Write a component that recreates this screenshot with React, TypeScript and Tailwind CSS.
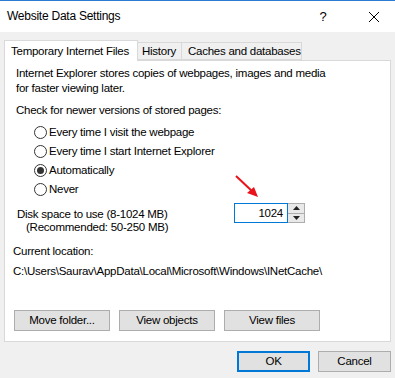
import React from "react";

const FONT = { fontFamily: '"Liberation Sans", Arial, sans-serif', letterSpacing: "-0.25px" };

function Radio({ label, checked }: { label: string; checked?: boolean }) {
  return (
    <div className="flex items-center h-[19px]">
      <span className="w-[13px] h-[13px] rounded-full border border-[#333] bg-white flex items-center justify-center">
        {checked && <span className="w-[7px] h-[7px] rounded-full bg-[#333]" />}
      </span>
      <span className="ml-[2px]">{label}</span>
    </div>
  );
}

function WinButton({ children, className = "" }: { children: React.ReactNode; className?: string }) {
  return (
    <button className={`h-[21px] bg-[#e1e1e1] border border-[#adadad] text-black text-[11.5px] leading-none ${className}`}>
      {children}
    </button>
  );
}

export default function App() {
  return (
    <div className="w-[395px] h-[378px] bg-[#f0f0f0] text-[11.5px] leading-[15px] text-black overflow-hidden whitespace-nowrap" style={FONT}>
      {/* title bar */}
      <div className="h-[32px] bg-white border-t border-[#2b7bd3] flex items-center">
        <span className="pl-[7px] flex-1 text-[12px]">Website Data Settings</span>
        <span className="w-[20px] text-center text-[13px] mr-[35px]">?</span>
        <svg width="12" height="12" viewBox="0 0 12 12" className="mr-[15px]">
          <path d="M1 1 L11 11 M11 1 L1 11" stroke="#000" strokeWidth="1" />
        </svg>
      </div>

      <div className="px-[4px] pt-[7px]">
        {/* tabs */}
        <div className="flex items-end h-[21px] relative z-10">
          <div className="h-[21px] w-[134px] bg-white border border-b-0 border-[#d9d9d9] pl-[6px] pt-[3px] -mb-px">
            Temporary Internet Files
          </div>
          <div className="h-[18px] w-[44px] border border-l-0 border-[#d9d9d9] pl-[4px] leading-[17px]">History</div>
          <div className="h-[18px] w-[120px] border border-l-0 border-[#d9d9d9] pl-[6px] leading-[17px]">
            Caches and databases
          </div>
        </div>

        {/* panel */}
        <div className="h-[282px] bg-white border border-[#d9d9d9] relative pl-[11px] pt-[5px]">
          <p className="leading-[15px]">
            Internet Explorer stores copies of webpages, images and media
            <br />
            for faster viewing later.
          </p>
          <p className="mt-[7px] leading-[15px]">Check for newer versions of stored pages:</p>
          <div className="pl-[18px] mt-[5px]">
            <Radio label="Every time I visit the webpage" />
            <Radio label="Every time I start Internet Explorer" />
            <Radio label="Automatically" checked />
            <Radio label="Never" />
          </div>

          <div className="flex mt-[9px]">
            <div className="leading-[13px] pl-[1px]">
              <div>Disk space to use (8-1024 MB)</div>
              <div className="pl-[9px]">(Recommended: 50-250 MB)</div>
            </div>
            <div className="ml-auto mr-[85px] mt-[-5px] flex relative h-[20px]">
              <svg width="26" height="24" viewBox="0 0 26 24" className="absolute left-[1px] top-[-28px]">
                <path d="M1 1 L18 17" stroke="#e8131b" strokeWidth="2" />
                <path d="M23 22 L12 18 L19 12 Z" fill="#e8131b" />
              </svg>
              <div className="w-[54px] h-[20px] border border-[#0078d7] text-right pr-[4px] leading-[18px]">1024</div>
              <div className="w-[17px] h-[20px] border border-[#adadad] border-l-0 bg-[#e9e9e9] flex flex-col">
                <div className="flex-1 flex items-center justify-center border-b border-[#adadad]">
                  <svg width="7" height="4" viewBox="0 0 7 4"><path d="M0 4 L3.5 0 L7 4 Z" fill="#222" /></svg>
                </div>
                <div className="flex-1 flex items-center justify-center">
                  <svg width="7" height="4" viewBox="0 0 7 4"><path d="M0 0 L3.5 4 L7 0 Z" fill="#222" /></svg>
                </div>
              </div>
            </div>
          </div>

          <div className="mt-[10px] -ml-[3px]">Current location:</div>
          <div className="mt-[5px] -ml-[3px]">C:\Users\Saurav\AppData\Local\Microsoft\Windows\INetCache\</div>

          <div className="flex absolute left-[9px] top-[249px] gap-[9px]">
            <WinButton className="w-[96px]">Move folder...</WinButton>
            <WinButton className="w-[96px]">View objects</WinButton>
            <WinButton className="w-[96px]">View files</WinButton>
          </div>
        </div>

        {/* footer */}
        <div className="flex justify-end gap-[8px] mt-[9px] pr-[0px]">
          <button className="w-[73px] h-[21px] bg-[#e1e1e1] border-2 border-[#0078d7] leading-none">OK</button>
          <WinButton className="w-[73px]">Cancel</WinButton>
        </div>
      </div>
    </div>
  );
}
